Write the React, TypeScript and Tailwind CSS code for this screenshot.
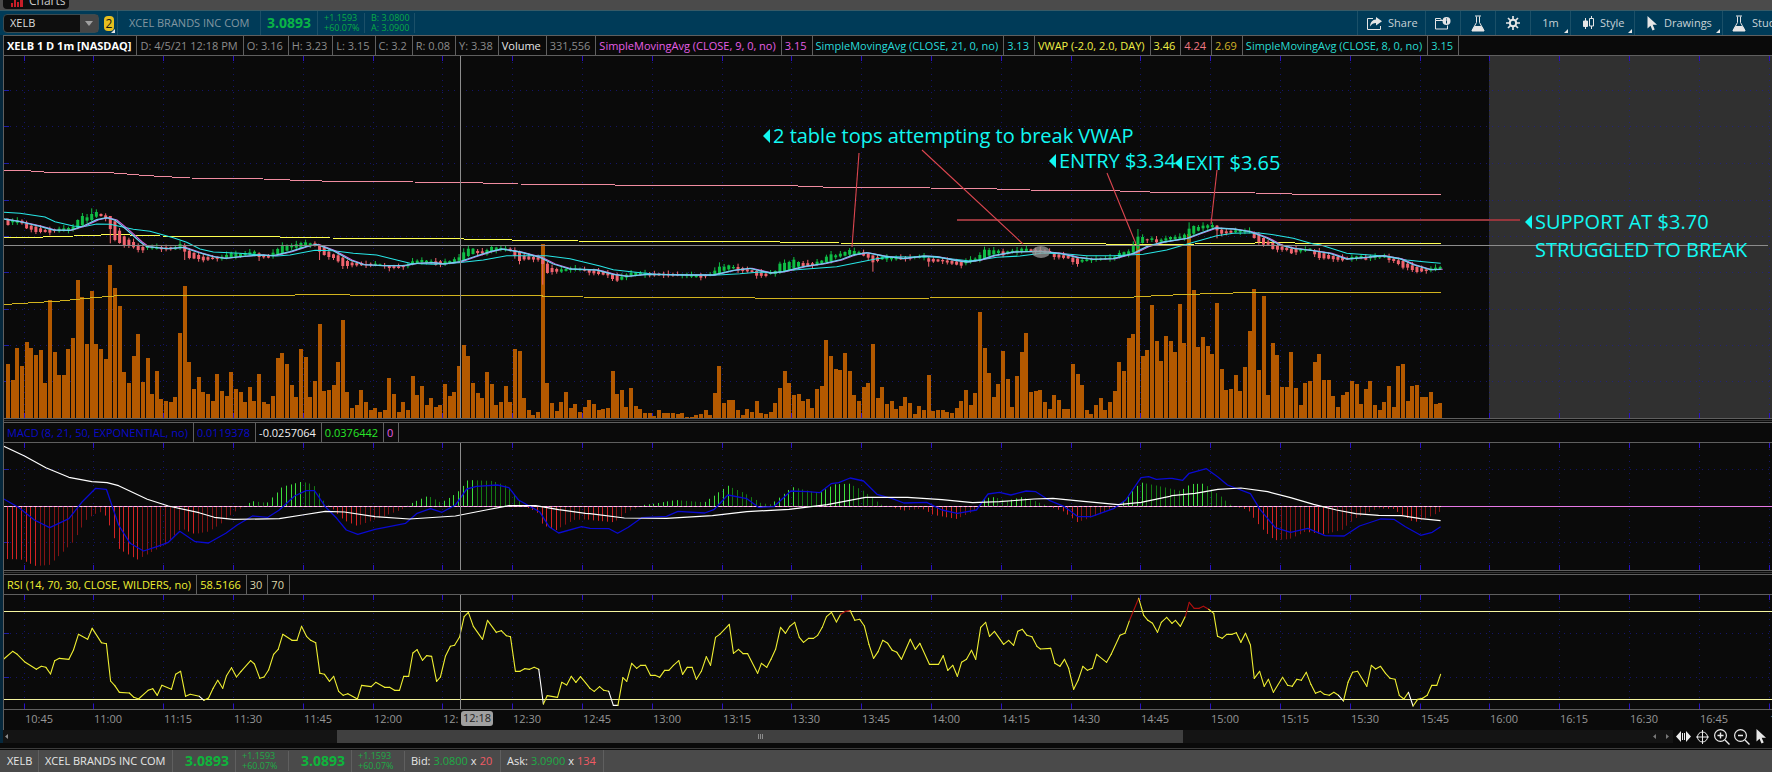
import React from 'react';

type Point = [number, number];
type Candle = [number, number, number, number];

// Minute bars run along a fixed time scale
const BAR_STEP = 4.65;
const FIRST_BAR = 8;
const QUARTER = 69.8;
const FIRST_TICK = 24.5;

const barX = (k: number) => FIRST_BAR + BAR_STEP * k;
const tickX = (i: number) => Math.round(FIRST_TICK + QUARTER * i);

// One stretch of a study, stored in thirds of a pixel from its own origin
const price = (x0: number, y0: number, points: Point[]): Point[] =>
	points.map(([x, y]) => [x0 + x / 3, y0 + y / 3]);

const study = (x0: number, points: Point[]): Point[] =>
	points.map(([x, y]) => [x0 + x * 0.38265, 415 + y / 3]);

const heights = (base: number, tops: number[]) => tops.map((top) => (base - top) / 3);

const toPath = (points: Point[]) =>
	points.map(([x, y]) => `${x.toFixed(1)},${y.toFixed(1)}`).join(' ');

const VOLUME = [
	...heights(775, [
		612, 660, 564, 618, 546, 564, 585, 570, 669, 420, 576, 645, 645, 567, 534, 360, 411, 552, 393, 552,
		567, 597, 315, 384, 438, 636, 669, 588, 522, 666, 594, 702, 633, 717, 723, 726, 711, 519, 378, 606,
		687, 651, 696, 702, 723, 642, 693, 708, 636, 687, 696, 726, 681, 723, 642, 726, 732, 708, 594, 579,
		612, 675, 711, 567, 591, 711, 663, 492, 693, 690, 675, 606, 480, 696, 744, 735, 690, 726, 750, 744,
		756, 750, 654, 702, 756, 726, 750, 648, 705, 678, 735, 714, 741, 735, 672, 708, 696, 618, 555, 588,
		669, 699, 714, 636, 672, 735, 726, 678, 726, 567, 573, 714, 750, 765, 756, 252, 669, 729, 753, 726,
		696, 744, 732, 756, 741, 720, 732, 750, 747, 744, 633, 702, 690, 741, 684, 738, 747, 759, 759, 768,
		750, 759, 759, 759, 762, 759, 771, 771, 765, 762, 750, 765, 699, 618, 729, 720, 720, 750, 765, 747,
		756, 723, 759, 762, 756, 729, 684, 633, 669, 705, 702, 723, 717, 744, 687, 678, 540, 588, 627, 630,
		579, 633, 705, 723, 681, 669, 552, 714, 681
	]),
	...heights(925, [
		882, 873, 897, 888, 861, 879, 912, 888, 900, 795, 903, 900, 900, 906, 909, 894, 873, 840, 885, 849,
		606, 714, 789, 861, 822, 723, 807, 891, 798, 726, 669, 846, 843, 840, 876, 897, 855, 870, 897, 897,
		762, 792, 825, 900, 912, 885, 864, 900, 876, 843, 756, 783, 684, 672, 405, 738, 720, 585, 693, 753,
		678, 693, 726, 582, 699, 372, 540, 711, 681, 708, 732, 579, 777, 840, 837, 795, 843, 771, 663, 537,
		780, 558, 855, 699, 735, 831, 831, 726, 834, 885, 819, 813, 756, 732, 810, 810, 858, 891, 855, 846,
		813, 822, 882, 837, 813, 885, 900, 876, 828, 891, 768, 762, 873, 828, 825, 861, 861, 846, 882, 879
	])
];

// [bar, body top, body bottom, direction]; bars in between are interpolated
const CANDLES: Candle[] = [
	[0, 177, 195, -1], [1, 181, 187, 1], [3, 182, 190, -1], [4, 190, 205, -1], [5, 197, 209, -1], [6, 200, 216, -1],
	[8, 210, 216, -1], [9, 208, 218, -1], [10, 208, 212, -1], [11, 206, 214, 1], [13, 204, 212, 1], [14, 200, 209, 1],
	[15, 180, 204, 1], [16, 168, 196, 1], [17, 172, 182, 1], [18, 162, 180, 1], [19, 156, 170, 1], [20, 162, 168, -1],
	[21, 166, 176, -1], [22, 168, 207, -1], [23, 184, 240, -1], [24, 212, 249, -1], [25, 229, 255, -1], [26, 239, 258, -1],
	[27, 246, 262, -1], [28, 255, 270, -1], [29, 261, 271, -1], [30, 258, 264, 1], [33, 262, 268, -1], [36, 262, 268, 1],
	[37, 252, 262, 1], [38, 255, 275, -1], [39, 272, 294, -1], [41, 285, 297, -1], [42, 290, 301, -1], [44, 293, 297, -1],
	[46, 290, 296, 1], [48, 279, 292, 1], [50, 281, 288, 1], [53, 275, 281, 1], [54, 280, 291, -1], [56, 288, 293, -1],
	[57, 278, 288, 1], [58, 267, 282, 1], [59, 255, 280, 1], [60, 255, 272, 1], [61, 256, 262, 1], [63, 249, 264, 1],
	[64, 247, 258, 1], [65, 250, 256, 1], [66, 250, 254, -1], [67, 256, 275, -1], [68, 262, 285, -1], [69, 275, 291, -1],
	[70, 283, 294, -1], [71, 286, 304, -1], [72, 293, 318, -1], [73, 303, 318, -1], [74, 308, 316, -1], [77, 312, 316, -1],
	[79, 311, 315, 1], [81, 315, 318, -1], [82, 318, 324, -1], [84, 319, 324, -1], [86, 314, 319, 1], [87, 304, 312, 1],
	[89, 300, 306, 1], [91, 304, 309, 1], [92, 304, 315, -1], [94, 304, 312, 1], [95, 303, 309, 1], [97, 292, 302, 1],
	[98, 277, 302, 1], [99, 266, 288, 1], [100, 266, 282, 1], [101, 273, 279, -1], [102, 274, 280, -1], [103, 270, 283, 1],
	[104, 261, 276, 1], [106, 264, 268, 1], [108, 266, 273, -1], [109, 270, 288, -1], [110, 275, 303, -1], [111, 288, 298, -1],
	[114, 292, 299, -1], [115, 298, 312, -1], [116, 311, 339, -1], [117, 324, 336, -1], [118, 327, 335, -1], [119, 328, 335, 1],
	[122, 325, 328, 1], [124, 328, 332, -1], [125, 330, 338, -1], [129, 338, 346, -1], [130, 343, 357, -1], [131, 344, 362, -1],
	[132, 350, 359, 1], [134, 338, 346, 1], [136, 339, 345, 1], [138, 340, 346, -1], [141, 341, 346, -1], [145, 343, 347, 1],
	[149, 347, 353, -1], [151, 342, 345, 1], [152, 332, 345, 1], [153, 320, 342, 1], [154, 320, 332, 1], [155, 316, 328, 1],
	[156, 321, 325, 1], [157, 321, 331, -1], [160, 331, 336, -1], [161, 333, 347, -1], [163, 341, 348, -1], [164, 338, 342, 1],
	[165, 333, 342, 1], [166, 311, 336, 1], [168, 306, 330, 1], [169, 299, 325, 1], [170, 306, 320, 1], [171, 309, 318, -1],
	[173, 310, 318, -1], [174, 305, 312, 1], [175, 302, 310, 1], [176, 290, 306, 1], [177, 283, 303, 1], [178, 286, 292, 1],
	[180, 276, 287, 1], [181, 270, 284, 1], [183, 276, 281, 1], [184, 277, 287, -1], [185, 281, 293, -1], [186, 286, 307, -1],
	[187, 292, 303, -1], [188, 290, 298, 1], [190, 291, 298, 1], [192, 293, 298, -1], [195, 290, 294, 1], [197, 289, 293, 1],
	[198, 295, 305, -1], [201, 300, 304, -1], [203, 303, 311, -1], [205, 306, 317, -1], [206, 301, 310, 1], [208, 296, 304, 1],
	[209, 285, 299, 1], [210, 269, 297, 1], [211, 270, 287, 1], [213, 272, 279, 1], [214, 274, 286, -1], [215, 274, 280, 1],
	[217, 271, 278, 1], [218, 266, 275, 1], [219, 266, 273, 1], [220, 268, 275, -1], [224, 273, 278, -1], [225, 281, 291, -1],
	[228, 288, 295, -1], [229, 293, 306, -1], [230, 295, 312, -1], [231, 300, 305, 1], [234, 295, 299, 1], [236, 294, 298, 1],
	[238, 290, 296, 1], [239, 279, 292, 1], [241, 274, 284, 1], [242, 254, 278, 1], [243, 230, 265, 1], [244, 231, 249, 1],
	[245, 238, 241, -1], [246, 235, 240, 1], [247, 238, 247, -1], [248, 239, 245, 1], [250, 231, 238, 1], [252, 230, 236, 1],
	[253, 224, 234, 1], [254, 206, 228, 1], [255, 198, 221, 1], [256, 201, 212, 1], [257, 197, 205, 1], [259, 195, 202, 1],
	[260, 197, 211, -1], [261, 209, 221, -1], [262, 214, 220, -1], [264, 211, 217, 1], [267, 212, 216, 1], [268, 218, 234, -1],
	[269, 224, 246, -1], [270, 234, 254, -1], [271, 245, 254, -1], [272, 249, 267, -1], [273, 256, 269, -1], [275, 263, 270, -1],
	[276, 266, 280, -1], [278, 268, 274, 1], [280, 266, 270, 1], [281, 273, 283, -1], [282, 274, 294, -1], [284, 285, 296, -1],
	[287, 293, 301, -1], [288, 294, 298, -1], [289, 291, 297, 1], [291, 288, 294, 1], [292, 292, 299, -1], [293, 288, 295, 1],
	[296, 287, 292, 1], [297, 291, 300, -1], [298, 296, 303, -1], [299, 301, 312, -1], [300, 303, 323, -1], [301, 311, 323, -1],
	[302, 316, 330, -1], [303, 321, 336, -1], [305, 328, 333, -1], [306, 325, 331, 1], [308, 321, 328, 1]
];

const LONG_WICKS: Record<number, Point> = {
	16: [159, 200], 18: [145, 184], 22: [168, 250], 28: [250, 277], 38: [250, 300], 54: [277, 303], 67: [252, 300],
	72: [290, 327], 82: [315, 334], 98: [265, 305], 104: [257, 280], 110: [272, 313], 115: [298, 374], 153: [307, 345],
	161: [330, 356], 186: [286, 335], 198: [290, 320], 210: [260, 300], 219: [255, 275], 230: [292, 320],
	243: [207, 270], 254: [187, 240], 260: [195, 235], 300: [300, 328]
};

const bars = Array.from({ length: 309 }, (_, k) => {
	let i = CANDLES.length - 1;
	while (i > 0 && CANDLES[i][0] > k) i--;
	const a = CANDLES[i];
	const b = CANDLES[Math.min(i + 1, CANDLES.length - 1)];
	const t = b[0] === a[0] ? 0 : (k - a[0]) / (b[0] - a[0]);
	const top = a[1] + (b[1] - a[1]) * t;
	const bottom = a[2] + (b[2] - a[2]) * t;
	const wick = LONG_WICKS[k] ?? [top - 2 - ((k * 7) % 5) * 2, bottom + 2 + ((k * 3) % 4) * 2];
	return { k, up: a[3] > 0, top: 160 + top / 3, bottom: 160 + bottom / 3, high: 160 + wick[0] / 3, low: 160 + wick[1] / 3 };
});

const SMA_21: Point[] = [
	...price(0, 160, [
		[12, 157], [60, 160], [135, 171], [165, 185], [220, 198], [250, 200], [290, 192], [330, 193], [400, 208],
		[450, 214], [520, 233], [560, 247], [600, 267], [640, 276], [720, 280], [780, 285], [830, 288], [870, 285],
		[945, 271], [1000, 272], [1060, 280], [1130, 285], [1190, 300], [1230, 310], [1300, 313]
	]),
	...price(440, 160, [
		[40, 310], [130, 300], [200, 287], [320, 287], [390, 296], [480, 318], [520, 329], [580, 336], [640, 342],
		[700, 344], [820, 346], [900, 341], [960, 336], [1010, 338], [1060, 330], [1190, 320], [1250, 308], [1310, 296]
	]),
	...price(880, 110, [
		[40, 440], [90, 441], [150, 440], [210, 446], [270, 453], [300, 450], [350, 442], [420, 438], [490, 429],
		[560, 432], [620, 437], [700, 437], [790, 433], [860, 420], [930, 400], [1010, 377], [1060, 370], [1130, 368],
		[1180, 374], [1240, 385], [1300, 402]
	]),
	...price(1320, 110, [[0, 404], [80, 430], [180, 437], [260, 450], [310, 455], [362, 460]])
];

const SMA_8: Point[] = [
	...price(0, 160, [
		[12, 177], [60, 185], [120, 199], [160, 210], [210, 211], [250, 198], [290, 179], [320, 173], [345, 180],
		[380, 209], [420, 245], [440, 260], [500, 266], [550, 262], [600, 279], [640, 290], [675, 295], [720, 290],
		[780, 285], [820, 287], [870, 275], [920, 259], [950, 253], [1000, 272], [1050, 300], [1090, 314], [1150, 317],
		[1210, 317], [1250, 310], [1300, 308], [1330, 312]
	]),
	...price(440, 160, [
		[60, 305], [100, 291], [150, 275], [185, 267], [240, 276], [300, 292], [340, 312], [390, 327], [470, 330],
		[520, 343], [560, 349], [620, 343], [740, 345], [820, 345], [880, 331], [930, 325], [990, 339], [1030, 335],
		[1090, 320], [1150, 311], [1200, 300], [1240, 285], [1280, 278]
	]),
	...price(880, 110, [
		[10, 438], [70, 446], [130, 438], [170, 440], [220, 450], [260, 456], [300, 450], [340, 437], [400, 426],
		[480, 424], [540, 430], [590, 442], [640, 448], [700, 446], [760, 430], [800, 410], [850, 396], [920, 385],
		[960, 370], [1005, 354], [1060, 357], [1110, 365], [1160, 384], [1200, 405], [1240, 415], [1300, 422]
	]),
	...price(1320, 110, [[30, 430], [80, 447], [130, 443], [190, 437], [240, 446], [280, 464], [330, 479], [362, 478]])
];

const VWAP_UPPER: Point[] = [
	[4, 170.5], [25, 170.5], [50, 172.5], [108, 172.5], [145, 175.5], [190, 178], [250, 178.5], [303, 180.5],
	[340, 181.5], [413, 182], [465, 182.5], [518, 184], [610, 184.5], [620, 185.5], [785, 185.5], [835, 187.5],
	[880, 187.5], [980, 188.5], [1030, 190], [1120, 191], [1165, 192.5], [1255, 193], [1310, 194.5], [1441, 194.5]
];
const VWAP: Point[] = [
	[4, 237.5], [27, 237.5], [60, 236.5], [115, 234.5], [160, 236], [255, 236.5], [330, 238], [440, 238.5],
	[535, 240.5], [620, 241.5], [775, 241.5], [785, 242.5], [893, 243.5], [1100, 243.5], [1112, 244.5], [1150, 244.5],
	[1240, 243.5], [1270, 242.5], [1320, 243.5], [1441, 243.5]
];
const VWAP_LOWER: Point[] = [
	[4, 304.5], [60, 301], [90, 298], [120, 295.5], [290, 295.5], [300, 294.5], [345, 294.5], [355, 295.5],
	[540, 295.5], [545, 296.5], [620, 297.5], [750, 297.5], [760, 298.5], [880, 298.5], [980, 297.5], [1125, 297.5],
	[1160, 295.5], [1200, 294], [1250, 292.5], [1441, 292.5]
];

const MACD_AVG: Point[] = [
	...study(0, [
		[10, 94], [64, 123], [120, 158], [180, 187], [240, 200], [280, 203], [310, 212], [385, 253], [440, 273],
		[520, 293], [560, 307], [610, 313], [730, 311], [790, 300], [850, 289], [900, 291], [980, 305], [1070, 312],
		[1190, 303], [1270, 285], [1330, 272], [1400, 272], [1460, 284], [1530, 295]
	]),
	...study(590, [
		[0, 296], [90, 309], [200, 310], [320, 302], [410, 290], [520, 283], [620, 269], [720, 247], [830, 247],
		[920, 254], [1000, 263], [1070, 260], [1160, 252], [1210, 250], [1290, 259], [1380, 269], [1440, 262], [1515, 244]
	]),
	...study(1172, [
		[0, 242], [60, 235], [120, 223], [180, 219], [250, 230], [310, 248], [370, 268], [430, 285], [480, 296],
		[540, 301], [600, 302], [650, 311], [702, 317]
	])
];

const MACD_VALUE: Point[] = [
	...study(0, [
		[10, 252], [50, 278], [90, 315], [130, 338], [180, 311], [215, 260], [250, 220], [278, 223], [310, 330],
		[340, 385], [375, 408], [410, 395], [440, 382], [470, 349], [510, 380], [545, 384], [590, 355], [620, 330],
		[660, 303], [700, 307], [730, 285], [770, 243], [800, 227], [822, 227], [850, 275], [880, 310], [905, 345],
		[935, 358], [980, 343], [1060, 325], [1090, 295], [1125, 281], [1155, 292], [1190, 270], [1220, 222],
		[1245, 214], [1300, 210], [1330, 218], [1355, 255], [1410, 290], [1435, 335], [1460, 354], [1520, 335]
	]),
	...study(590, [
		[0, 340], [50, 341], [72, 355], [100, 337], [135, 308], [200, 304], [230, 289], [300, 294], [325, 283],
		[360, 240], [410, 251], [440, 277], [480, 275], [525, 228], [570, 230], [600, 233], [630, 206], [650, 203],
		[680, 189], [715, 198], [750, 238], [790, 251], [820, 264], [880, 262], [920, 285], [960, 295], [1010, 285],
		[1040, 237], [1070, 232], [1100, 240], [1140, 228], [1165, 230], [1200, 256], [1240, 275], [1275, 305],
		[1310, 305], [1370, 280], [1400, 255], [1440, 188], [1460, 185], [1480, 193], [1515, 190]
	]),
	...study(1172, [
		[0, 190], [28, 196], [45, 175], [90, 161], [120, 186], [145, 210], [205, 236], [230, 283], [270, 338],
		[310, 352], [355, 340], [400, 362], [450, 363], [490, 333], [545, 312], [580, 313], [610, 335], [650, 361],
		[680, 352], [702, 335]
	])
];

const HISTOGRAM: Point[] = [
	...study(0, [
		[10, 432], [55, 433], [95, 453], [130, 450], [190, 385], [230, 310], [262, 290], [280, 305], [310, 400],
		[360, 434], [440, 385], [475, 340], [510, 357], [545, 350], [575, 330], [615, 290], [640, 274], [660, 258],
		[700, 264], [740, 215], [790, 200], [820, 208], [850, 262], [865, 276], [900, 315], [935, 333], [990, 310],
		[1055, 282], [1070, 268], [1120, 242], [1155, 263], [1195, 235], [1225, 195], [1290, 198], [1330, 215],
		[1360, 260], [1375, 276], [1405, 290], [1420, 330], [1455, 345], [1500, 315], [1538, 313]
	]),
	...study(590, [
		[0, 315], [65, 322], [100, 290], [140, 270], [170, 266], [225, 255], [300, 262], [325, 243], [362, 212],
		[410, 237], [450, 265], [475, 268], [530, 216], [600, 235], [640, 208], [680, 206], [720, 230], [760, 268],
		[790, 276], [820, 287], [870, 281], [900, 300], [960, 312], [1010, 285], [1030, 250], [1060, 246], [1090, 258],
		[1130, 246], [1170, 260], [1200, 274], [1240, 290], [1275, 322], [1330, 300], [1375, 276], [1400, 255],
		[1440, 202], [1500, 216]
	]),
	...study(1172, [
		[0, 222], [25, 228], [50, 207], [85, 206], [130, 245], [155, 270], [200, 285], [235, 340], [270, 376],
		[310, 372], [350, 350], [400, 358], [445, 345], [480, 310], [540, 280], [580, 282], [610, 305], [635, 322],
		[670, 308], [702, 290]
	])
];

const histogramAt = (x: number) => {
	let i = 0;
	while (i < HISTOGRAM.length - 2 && HISTOGRAM[i + 1][0] < x) i++;
	const [x1, y1] = HISTOGRAM[i];
	const [x2, y2] = HISTOGRAM[i + 1];
	return y1 + ((y2 - y1) * (x - x1)) / (x2 - x1);
};

const RSI: Point[] = [
	...study(0, [
		[10, 732], [33, 709], [45, 718], [64, 740], [95, 763], [108, 754], [120, 757], [132, 777], [143, 737],
		[155, 730], [180, 733], [192, 705], [205, 658], [229, 673], [241, 640], [265, 683], [278, 686], [289, 798],
		[300, 812], [312, 832], [338, 834], [350, 847], [362, 852], [387, 826], [399, 821], [411, 841], [423, 811],
		[448, 823], [459, 778], [472, 769], [485, 844], [497, 838], [521, 844], [533, 856], [545, 849], [557, 820],
		[569, 796], [582, 820], [592, 782], [605, 758], [618, 786], [630, 769], [655, 737], [665, 747], [679, 790],
		[690, 786], [702, 765], [715, 718], [727, 703], [739, 658], [763, 676], [776, 676], [788, 634], [801, 664],
		[812, 676], [825, 683], [836, 775], [848, 778], [861, 799], [872, 784], [885, 829], [897, 841], [909, 836],
		[934, 852], [945, 811], [970, 815], [982, 802], [1005, 817], [1018, 817], [1031, 826], [1044, 826], [1055, 784],
		[1068, 784], [1079, 714], [1090, 704], [1104, 736], [1115, 722], [1128, 724], [1141, 799], [1151, 786],
		[1164, 724], [1177, 694], [1188, 691], [1201, 666], [1213, 605], [1224, 592], [1237, 634], [1261, 673],
		[1274, 616], [1297, 652], [1310, 647], [1323, 662], [1334, 665], [1347, 769], [1359, 769], [1371, 761],
		[1384, 763], [1396, 757], [1408, 763], [1420, 867], [1430, 842], [1457, 847], [1468, 802], [1481, 810],
		[1493, 784], [1505, 802], [1517, 785], [1530, 803]
	]),
	...study(590, [
		[0, 820], [11, 829], [25, 815], [36, 826], [49, 829], [61, 871], [73, 871], [86, 788], [96, 799], [109, 745],
		[122, 760], [132, 751], [145, 751], [158, 781], [170, 781], [182, 787], [195, 766], [206, 766], [218, 751],
		[232, 737], [242, 778], [254, 757], [267, 757], [278, 793], [291, 769], [304, 725], [315, 751], [328, 667],
		[339, 658], [364, 628], [375, 715], [388, 703], [400, 716], [412, 716], [438, 775], [448, 745], [462, 757],
		[473, 733], [485, 703], [498, 637], [511, 655], [522, 634], [535, 622], [547, 667], [558, 682], [571, 670],
		[584, 670], [595, 661], [607, 637], [618, 605], [631, 592], [644, 621], [655, 598], [668, 589], [680, 587],
		[692, 616], [705, 613], [717, 633], [729, 688], [741, 730], [753, 710], [765, 676], [778, 685], [790, 706],
		[802, 712], [814, 733], [837, 673], [850, 703], [862, 685], [887, 748], [911, 748], [923, 722], [935, 766],
		[948, 751], [960, 784], [971, 742], [984, 733], [997, 706], [1008, 733], [1021, 637], [1034, 622], [1044, 664],
		[1057, 649], [1081, 688], [1094, 676], [1107, 691], [1118, 649], [1130, 643], [1142, 661], [1155, 665],
		[1168, 694], [1177, 702], [1204, 700], [1215, 745], [1228, 754], [1240, 733], [1251, 760], [1264, 823],
		[1276, 795], [1288, 754], [1300, 766], [1313, 760], [1324, 718], [1350, 742], [1362, 718], [1385, 661],
		[1398, 655], [1410, 616], [1434, 550], [1447, 601], [1458, 616], [1470, 625], [1483, 652], [1493, 622],
		[1507, 607]
	]),
	...study(1172, [
		[0, 625], [9, 616], [22, 634], [35, 604], [45, 562], [58, 580], [71, 580], [82, 574], [96, 583], [109, 595],
		[119, 664], [131, 670], [143, 658], [157, 658], [168, 653], [180, 682], [192, 655], [205, 690], [215, 790],
		[229, 769], [241, 814], [252, 793], [265, 832], [289, 787], [302, 811], [314, 814], [326, 793], [338, 796],
		[351, 772], [363, 808], [375, 835], [388, 829], [398, 838], [411, 841], [423, 832], [435, 841], [448, 858],
		[460, 802], [472, 772], [485, 769], [509, 814], [521, 751], [532, 762], [545, 754], [558, 775], [570, 790],
		[583, 793], [594, 841], [606, 852], [618, 832], [630, 873], [642, 853], [655, 850], [667, 841], [679, 811],
		[692, 811], [702, 778]
	])
];

// Segments that end past a band take the overbought or oversold colour
const rsiColor = (y: number) => {
	if (y < 611.5) return '#b01010';
	if (y > 699.5) return '#ffffff';
	return '#eeee32';
};

const TIMES = [
	'10:45', '11:00', '11:15', '11:30', '11:45', '12:00', '12:15', '12:30', '12:45', '13:00', '13:15', '13:30', '13:45',
	'14:00', '14:15', '14:30', '14:45', '15:00', '15:15', '15:30', '15:45', '16:00', '16:15', '16:30', '16:45', '17:00'
];

const CROSSHAIR_X = 460.5;

interface GridProps {
	top: number;
	bottom: number;
	rows: number[];
}

const Grid: React.FC<GridProps> = ({ top, bottom, rows }) => (
	<g stroke="#1c1ca8">
		{rows.map((y) => (
			<g key={y}>
				<line x1="4" x2="1772" y1={y} y2={y} strokeDasharray="1 5" opacity="0.6" />
				<line x1="4" x2="9" y1={y} y2={y} />
			</g>
		))}
		{TIMES.map((time, i) => (
			<g key={time}>
				<line x1={tickX(i) - 0.5} x2={tickX(i) - 0.5} y1={top} y2={bottom} strokeDasharray="1 5" opacity="0.6" />
				<line x1={tickX(i) - 0.5} x2={tickX(i) - 0.5} y1={top} y2={top + 5} stroke="#2a10c8" />
				<line x1={tickX(i) - 0.5} x2={tickX(i) - 0.5} y1={bottom - 5} y2={bottom} stroke="#2a10c8" />
			</g>
		))}
	</g>
);

const Note: React.FC<{ x: number; y: number; lines: string[] }> = ({ x, y, lines }) => (
	<g fill="#12f8f2" fontSize="20">
		<path d={`M${x - 10} ${y - 7}l7 -7v14z`} />
		{lines.map((line, i) => (
			<text key={line} x={x} y={y + i * 28}>{line}</text>
		))}
	</g>
);

const PricePane: React.FC = () => (
	<svg className="block h-[362px] w-full" role="img" aria-label="Price and volume">
		<g transform="translate(-4 -56)">
			<rect x="1489" y="56" width="100%" height="362" fill="#303030" />
			<Grid top={56} bottom={418} rows={[90.5, 126.5, 163.5, 200.5, 236.5, 272.5, 309.5, 345.5, 381.5]} />
			<g fill="#b35900" shapeRendering="crispEdges">
				{VOLUME.map((h, k) => (
					<rect key={k} x={Math.round(barX(k) - 2)} y={418 - h} width="4" height={h} />
				))}
			</g>
			<g fill="none" shapeRendering="crispEdges">
				<polyline points={toPath(VWAP_UPPER)} stroke="#f08ca0" />
				<polyline points={toPath(VWAP_LOWER)} stroke="#d2b41e" />
				<polyline points={toPath(VWAP)} stroke="#ffff50" />
			</g>
			{bars.map(({ k, up, top, bottom, high, low }) => (
				<g key={k} fill={up ? '#0fbe46' : '#f0646e'}>
					<rect x={barX(k) - 0.5} y={high} width="1" height={low - high} />
					<rect x={barX(k) - 1.5} y={top} width="3" height={Math.max(1, bottom - top)} />
				</g>
			))}
			<g fill="none" strokeWidth="1.1">
				<polyline points={toPath(SMA_21)} stroke="#28e6e6" />
				<polyline points={toPath(SMA_8)} stroke="#d264dc" transform="translate(2 0)" />
				<polyline points={toPath(SMA_8)} stroke="#6ed2f0" strokeWidth="1.3" />
			</g>
			<ellipse cx="1041" cy="252" rx="9" ry="6" fill="#9a9a9a" opacity="0.75" />
			<line x1="4" x2="100%" y1="245.5" y2="245.5" stroke="#8c8c8c" />
			<line x1={CROSSHAIR_X} x2={CROSSHAIR_X} y1="56" y2="418" stroke="#8c8c8c" />
			<line x1="957" x2="1520" y1="220" y2="220" stroke="#96363c" strokeWidth="2" />
			<g stroke="#dc4650" strokeWidth="1.1">
				<line x1="859" y1="153" x2="852" y2="247" />
				<line x1="922" y1="150" x2="1023" y2="244" />
				<line x1="1107" y1="173" x2="1136" y2="244" />
				<line x1="1217" y1="170" x2="1211" y2="224" />
			</g>
			<Note x={773} y={143} lines={['2 table tops attempting to break VWAP']} />
			<Note x={1059} y={168} lines={['ENTRY $3.34']} />
			<Note x={1185} y={170} lines={['EXIT $3.65']} />
			<Note x={1535} y={229} lines={['SUPPORT AT $3.70', 'STRUGGLED TO BREAK']} />
		</g>
	</svg>
);

const MacdPane: React.FC = () => (
	<svg className="block h-[127px] w-full" role="img" aria-label="MACD">
		<g transform="translate(-4 -443)">
			<Grid top={443} bottom={570} rows={[469.5, 542.5]} />
			{bars.map(({ k }) => {
				const y = histogramAt(barX(k));
				const length = Math.abs(y - 506.5);
				const growing = length >= Math.abs(histogramAt(barX(k - 1)) - 506.5);
				const color = y < 506.5 ? (growing ? '#3cdc3c' : '#147814') : growing ? '#d22323' : '#821414';
				return (
					<rect key={k} x={Math.round(barX(k) - 1)} y={Math.min(y, 506.5)} width="1" height={length} fill={color} />
				);
			})}
			<line x1="4" x2="1776" y1="506.5" y2="506.5" stroke="#e678e6" />
			<line x1="4" x2="1441" y1="506.5" y2="506.5" stroke="#ffd2dc" strokeDasharray="3 2" />
			<g fill="none" strokeLinejoin="round">
				<polyline points={toPath(MACD_VALUE)} stroke="#0a0ad2" strokeWidth="1.3" />
				<polyline points={toPath(MACD_AVG)} stroke="#ffffff" strokeWidth="1.2" />
			</g>
			<line x1={CROSSHAIR_X} x2={CROSSHAIR_X} y1="443" y2="570" stroke="#8c8c8c" />
		</g>
	</svg>
);

const RsiPane: React.FC = () => (
	<svg className="block h-[114px] w-full" role="img" aria-label="RSI">
		<g transform="translate(-4 -595)">
			<Grid top={595} bottom={709} rows={[633.5, 677.5]} />
			<g stroke="#f5f5a0">
				<line x1="4" x2="1776" y1="611.5" y2="611.5" />
				<line x1="4" x2="1776" y1="699.5" y2="699.5" />
			</g>
			<g strokeWidth="1.1" strokeLinecap="round">
				{RSI.slice(1).map(([x, y], i) => (
					<line key={i} x1={RSI[i][0]} y1={RSI[i][1]} x2={x} y2={y} stroke={rsiColor(y)} />
				))}
			</g>
			<line x1={CROSSHAIR_X} x2={CROSSHAIR_X} y1="595" y2="709" stroke="#8c8c8c" />
		</g>
	</svg>
);

const TimeAxis: React.FC = () => (
	<svg className="block h-5 w-full" role="img" aria-label="Time axis">
		<g transform="translate(-4 -710)" fontSize="11" fill="#969696">
			{TIMES.map((time, i) => (
				<text key={time} x={tickX(i)} y="723">{time === '12:15' ? '12:' : time}</text>
			))}
			<rect x="461" y="711" width="32" height="15" rx="3" fill="#a0a0a0" />
			<text x="463" y="722" fill="#1e1e1e">12:18</text>
		</g>
	</svg>
);

const PaneGap: React.FC = () => (
	<div className="h-[3px] border-b border-[#0a0a0a] bg-[#0a0a0a]">
		<div className="h-0.5 border-b border-[#333]" />
	</div>
);

const StudyHeader: React.FC<{ cells: [string, string][] }> = ({ cells }) => (
	<div className="flex h-[21px] overflow-hidden whitespace-nowrap border-y border-[#5f5f5f] text-[11px] leading-[19px]">
		{cells.map(([text, color], i) => (
			<span key={i} className={`shrink-0 border-r border-[#5f5f5f] pl-[3px] pr-[5px] ${color}`}>{text}</span>
		))}
	</div>
);

const FlaskIcon: React.FC = () => (
	<svg className="h-[17px] w-[14px] shrink-0" viewBox="0 0 14 17" fill="none" stroke="#e6e6e6">
		<path d="M4 1h6M5.5 1.5v6L1 15.5h12L8.500 7.500v-6" />
		<path d="M3.500 11.500L1 16h12l-2.500-4.500z" fill="#e6e6e6" />
	</svg>
);

const CursorIcon: React.FC = () => (
	<svg className="h-[15px] w-[11px] shrink-0" viewBox="0 0 11 15" fill="#e6e6e6">
		<path d="M0.500 0v12.500l3-2.800 2 4.800 2.200-.9-2-4.800h4.300z" />
	</svg>
);

const Corner: React.FC = () => (
	<svg className="absolute bottom-0.5 right-0.5 h-1 w-1" viewBox="0 0 4 4" fill="#e6e6e6">
		<path d="M4 0v4H0z" />
	</svg>
);

const toolButton = 'relative flex h-6 shrink-0 items-center border-l border-[#1b5068] text-[11px] text-[#c8d2d7]';

const Toolbar: React.FC = () => (
	<div className="flex h-6 items-center overflow-hidden bg-[#003b58] whitespace-nowrap">
		<div className="ml-[3px] flex h-[19px] w-24 shrink-0 items-center rounded-sm border border-[#3c4b50] bg-[#0e0e0e]">
			<input
				aria-label="Symbol"
				defaultValue="XELB"
				className="h-4 w-[76px] bg-transparent pl-1.5 text-[11px] leading-4 text-[#dcdcdc] outline-none"
			/>
			<button aria-label="Symbol list" className="flex h-[17px] w-[18px] items-center justify-center bg-[#464646]">
				<svg className="h-[5px] w-2" viewBox="0 0 8 5" fill="#a0a0a0"><path d="M0 0h8L4 5z" /></svg>
			</button>
		</div>
		<button className="relative ml-[5px] flex h-6 w-3.5 shrink-0 items-center border-r border-[#1b5068]">
			<span className="h-[15px] w-2.5 rounded-sm bg-[#e6be1e] text-center text-[12px] leading-[15px] text-[#141414]">2</span>
			<Corner />
		</button>
		<span className="w-[143px] shrink-0 border-r border-[#1b5068] pl-[11px] text-[11px] leading-6 text-[#8296a0]">XCEL BRANDS INC COM</span>
		<span className="w-[57px] shrink-0 border-r border-[#1b5068] pl-1.5 text-[14px] font-bold leading-6 text-[#0ab446]">3.0893</span>
		<span className="w-[47px] shrink-0 border-r border-[#1b5068] pl-1.5 text-[9px] leading-[10px] text-[#0aaa46]">+1.1593<br />+60.07%</span>
		<span className="w-[50px] shrink-0 border-r border-[#1b5068] pl-1.5 text-[9px] leading-[10px] text-[#0aaa46]">B: 3.0800<br />A: 3.0900</span>
		<div className="ml-auto flex shrink-0">
			<button className={`${toolButton} w-[68px] gap-1.5 pl-[9px]`}>
				<svg className="h-[13px] w-[15px] shrink-0" viewBox="0 0 15 13" fill="none" stroke="#e6e6e6">
					<path d="M6 1.500H.500v11h13V9" />
					<path d="M9 0l6 4.200-6 4.200V6C6.500 6 4.500 7 3 9.500 3.200 5.500 5.500 2.700 9 2.500z" fill="#e6e6e6" stroke="none" />
				</svg>
				Share
			</button>
			<button aria-label="Chart info" className={`${toolButton} w-[35px] justify-center`}>
				<svg className="h-[13px] w-4" viewBox="0 0 16 13" fill="none" stroke="#e6e6e6">
					<path d="M8 3.500H.500V1.500h5l1 2M.500 3.500v8.500h12V8.500" />
					<circle cx="11.500" cy="4" r="4" fill="#e6e6e6" stroke="none" />
					<path d="M11.500 3.500v3M11.500 1.500v1" stroke="#003b58" />
				</svg>
			</button>
			<button aria-label="Studies editor" className={`${toolButton} w-[35px] justify-center`}><FlaskIcon /></button>
			<button aria-label="Settings" className={`${toolButton} w-[35px] justify-center`}>
				<svg className="h-3.5 w-3.5" viewBox="0 0 14 14" fill="none" stroke="#e6e6e6" strokeWidth="2">
					<circle cx="7" cy="7" r="3.200" />
					<path d="M7 0v3.500M7 10.500V14M0 7h3.500M10.500 7H14M2 2l2.500 2.500M9.500 9.500L12 12M12 2L9.500 4.500M4.500 9.500L2 12" strokeWidth="1.700" />
				</svg>
			</button>
			<button className={`${toolButton} w-10 justify-center`}>1m<Corner /></button>
			<button className={`${toolButton} w-16 gap-1.5 pl-3`}>
				<svg className="h-3.5 w-[11px] shrink-0" viewBox="0 0 11 14" fill="none" stroke="#e6e6e6">
					<path d="M2.500 2v11" />
					<path d="M.500 5h4v5.500h-4z" fill="#e6e6e6" />
					<path d="M8.500 0v2.500M8.500 10v3M6.500 2.500h4V10h-4z" />
				</svg>
				Style
				<Corner />
			</button>
			<button className={`${toolButton} w-[88px] gap-1.5 pl-3`}><CursorIcon />Drawings<Corner /></button>
			<button className={`${toolButton} w-[50px] gap-1.5 overflow-hidden pl-[9px]`}><FlaskIcon />Studies</button>
		</div>
	</div>
);

const ScrollRow: React.FC = () => (
	<div className="flex h-[13px] items-center">
		<div className="flex h-[13px] flex-1 items-center bg-[#141414]">
			<div className="flex h-full flex-[333] items-center pl-0.5">
				<svg className="h-[5px] w-[3px]" viewBox="0 0 3 5" fill="#8c8c8c"><path d="M3 0v5L0 2.500z" /></svg>
			</div>
			<div className="flex h-full flex-[847] items-center justify-center gap-px bg-[#404040]">
				<i className="h-[5px] w-px bg-[#8c8c8c]" />
				<i className="h-[5px] w-px bg-[#8c8c8c]" />
				<i className="h-[5px] w-px bg-[#8c8c8c]" />
			</div>
			<div className="flex h-full flex-[487] items-center justify-end gap-2.5 pr-1">
				<svg className="h-[5px] w-[3px]" viewBox="0 0 3 5" fill="#787878"><path d="M3 0v5L0 2.500z" /></svg>
				<svg className="h-[5px] w-[3px]" viewBox="0 0 3 5" fill="#787878"><path d="M0 0v5l3-2.500z" /></svg>
			</div>
		</div>
		<div className="flex w-[99px] shrink-0 items-center gap-1 pl-[3px]">
			<button aria-label="Expand bars" className="shrink-0">
				<svg className="h-[11px] w-[15px]" viewBox="0 0 15 11" fill="#ebebeb">
					<path d="M5 0v11L0 5.500zM10 0v11l5-5.500zM6 2h1v7H6zM8 2h1v7H8z" />
				</svg>
			</button>
			<button aria-label="Crosshair" className="shrink-0">
				<svg className="h-[15px] w-[15px]" viewBox="0 0 15 15" fill="none" stroke="#ebebeb">
					<circle cx="7.500" cy="8" r="5" />
					<path d="M7.500 1v14M1 8h13" />
				</svg>
			</button>
			<button aria-label="Zoom in" className="shrink-0">
				<svg className="h-4 w-4" viewBox="0 0 16 16" fill="none" stroke="#ebebeb">
					<circle cx="6.500" cy="6.500" r="5.900" strokeWidth="1.200" />
					<path d="M3.500 6.500h6M6.500 3.500v6M11 11l4.500 4.500" strokeWidth="1.400" />
				</svg>
			</button>
			<button aria-label="Zoom out" className="shrink-0">
				<svg className="h-4 w-4" viewBox="0 0 16 16" fill="none" stroke="#ebebeb">
					<circle cx="6.500" cy="6.500" r="5.900" strokeWidth="1.200" />
					<path d="M4 6.500h5M11 11l4.500 4.500" strokeWidth="1.400" />
				</svg>
			</button>
			<button aria-label="Pointer" className="ml-0.5 shrink-0"><CursorIcon /></button>
		</div>
	</div>
);

const StatusBar: React.FC = () => (
	<footer className="flex h-[22px] items-center overflow-hidden whitespace-nowrap bg-[#4a4a4a] text-[11px] leading-[22px] text-[#e6e6e6]">
		<span className="w-[39px] shrink-0 border-r border-[#5f5f5f] pl-[7px]">XELB</span>
		<span className="w-[134px] shrink-0 border-r border-[#5f5f5f] pl-1.5">XCEL BRANDS INC COM</span>
		<span className="w-[63px] shrink-0 border-r border-[#5f5f5f] pl-3 text-[14px] font-bold text-[#0fb43c]">3.0893</span>
		<span className="w-[53px] shrink-0 border-r border-[#5f5f5f] pl-1.5 text-[9px] leading-[10px] text-[#1eaa46]">+1.1593<br />+60.07%</span>
		<span className="w-[63px] shrink-0 border-r border-[#5f5f5f] pl-3 text-[14px] font-bold text-[#0fb43c]">3.0893</span>
		<span className="w-[53px] shrink-0 border-r border-[#5f5f5f] pl-1.5 text-[9px] leading-[10px] text-[#1eaa46]">+1.1593<br />+60.07%</span>
		<span className="flex w-24 shrink-0 gap-[3px] border-r border-[#5f5f5f] pl-1.5">
			Bid: <b className="font-normal text-[#1eaa46]">3.0800</b> x <b className="font-normal text-[#f05a64]">20</b>
		</span>
		<span className="flex w-[103px] shrink-0 gap-[3px] border-r border-[#5f5f5f] pl-1.5">
			Ask: <b className="font-normal text-[#1eaa46]">3.0900</b> x <b className="font-normal text-[#f05a64]">134</b>
		</span>
	</footer>
);

export default function App() {
	return (
		<div className="overflow-hidden bg-[#0a0a0a] font-['Open_Sans','Noto_Sans',sans-serif]">
			<div className="flex h-[11px] items-start overflow-hidden border-b border-[#375a66] bg-[#4b4b4b]">
				<button className="-mt-2 ml-[3px] flex h-[17px] w-[66px] items-center gap-1.5 rounded-b bg-[#0e0e0e] pl-2 text-[12px] leading-[17px] text-[#c8c8c8]">
					<svg className="h-3 w-3" viewBox="0 0 12 12" fill="#c81e28">
						<path d="M0 8h2v4H0zM3 5h2v7H3zM6 7h2v5H6zM9 0h3v12H9z" />
					</svg>
					Charts
				</button>
			</div>
			<Toolbar />
			<main className="border-l-[3px] border-[#06283c]">
				<div className="border-l border-[#5f5f5f]">
					<StudyHeader
						cells={[
							['XELB 1 D 1m [NASDAQ]', 'font-bold text-white'],
							['D: 4/5/21 12:18 PM', 'text-[#8c8c8c]'],
							['O: 3.16', 'text-[#8c8c8c]'],
							['H: 3.23', 'text-[#8c8c8c]'],
							['L: 3.15', 'text-[#8c8c8c]'],
							['C: 3.2', 'text-[#8c8c8c]'],
							['R: 0.08', 'text-[#8c8c8c]'],
							['Y: 3.38', 'text-[#8c8c8c]'],
							['Volume', 'text-[#e6e6e6]'],
							['331,556', 'text-[#8c8c8c]'],
							['SimpleMovingAvg (CLOSE, 9, 0, no)', 'text-[#e65fe6]'],
							['3.15', 'text-[#e65fe6]'],
							['SimpleMovingAvg (CLOSE, 21, 0, no)', 'text-[#28dcdc]'],
							['3.13', 'text-[#28dcdc]'],
							['VWAP (-2.0, 2.0, DAY)', 'text-[#f0f046]'],
							['3.46', 'text-[#f0f046]'],
							['4.24', 'text-[#f07882]'],
							['2.69', 'text-[#d2b428]'],
							['SimpleMovingAvg (CLOSE, 8, 0, no)', 'text-[#28dcd2]'],
							['3.15', 'text-[#28dcd2]']
						]}
					/>
					<PricePane />
					<div className="h-px bg-[#5f5f5f]" />
					<PaneGap />
					<StudyHeader
						cells={[
							['MACD (8, 21, 50, EXPONENTIAL, no)', 'text-[#0a0ac8]'],
							['0.0119378', 'text-[#0a0ac8]'],
							['-0.0257064', 'text-[#f0f0f0]'],
							['0.0376442', 'text-[#28e628]'],
							['0', 'text-[#e65fe6]']
						]}
					/>
					<MacdPane />
					<div className="h-px bg-[#5f5f5f]" />
					<PaneGap />
					<StudyHeader
						cells={[
							['RSI (14, 70, 30, CLOSE, WILDERS, no)', 'text-[#f0f032]'],
							['58.5166', 'text-[#f0f032]'],
							['30', 'text-[#dcd7aa]'],
							['70', 'text-[#dcd7aa]']
						]}
					/>
					<RsiPane />
					<div className="h-px bg-[#5f5f5f]" />
					<TimeAxis />
				</div>
				<ScrollRow />
			</main>
			<div className="mt-[5px] border-t border-[#3c3c3c] pt-px" />
			<StatusBar />
		</div>
	);
}
